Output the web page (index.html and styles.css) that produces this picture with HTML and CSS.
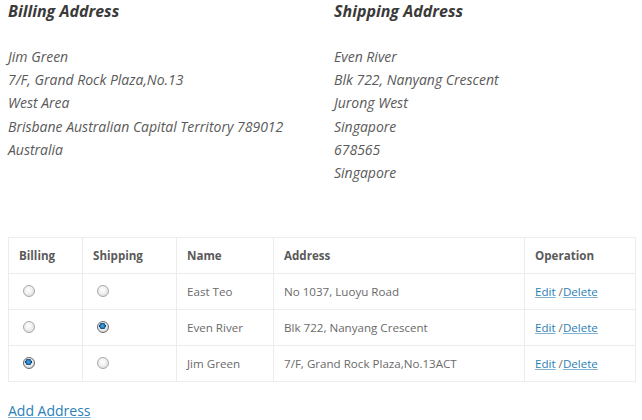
FILE: index.html
```html
<!DOCTYPE html>
<html>
<head>
<meta charset="utf-8">
<link rel="stylesheet" href="styles.css">
</head>
<body>
<div class="page">
  <div class="addresses">
    <div class="addr">
      <h3 class="addr-title">Billing Address</h3>
      <div class="addr-lines">
        <div>Jim Green</div>
        <div>7/F, Grand Rock Plaza,No.13</div>
        <div>West Area</div>
        <div>Brisbane Australian Capital Territory 789012</div>
        <div>Australia</div>
      </div>
    </div>
    <div class="addr">
      <h3 class="addr-title">Shipping Address</h3>
      <div class="addr-lines">
        <div>Even River</div>
        <div>Blk 722, Nanyang Crescent</div>
        <div>Jurong West</div>
        <div>Singapore</div>
        <div>678565</div>
        <div>Singapore</div>
      </div>
    </div>
  </div>

  <table class="book">
    <thead>
      <tr>
        <th class="c-bill">Billing</th>
        <th class="c-ship">Shipping</th>
        <th class="c-name">Name</th>
        <th class="c-addr">Address</th>
        <th class="c-op">Operation</th>
      </tr>
    </thead>
    <tbody>
      <tr>
        <td><input type="radio" class="radio" name="bill"></td>
        <td><input type="radio" class="radio" name="ship"></td>
        <td>East Teo</td>
        <td>No 1037, Luoyu Road</td>
        <td><a href="#">Edit</a> /<a href="#">Delete</a></td>
      </tr>
      <tr>
        <td><input type="radio" class="radio" name="bill"></td>
        <td><input type="radio" class="radio" name="ship" checked></td>
        <td>Even River</td>
        <td>Blk 722, Nanyang Crescent</td>
        <td><a href="#">Edit</a> /<a href="#">Delete</a></td>
      </tr>
      <tr>
        <td><input type="radio" class="radio" name="bill" checked></td>
        <td><input type="radio" class="radio" name="ship"></td>
        <td>Jim Green</td>
        <td>7/F, Grand Rock Plaza,No.13ACT</td>
        <td><a href="#">Edit</a> /<a href="#">Delete</a></td>
      </tr>
    </tbody>
  </table>

  <a class="add" href="#">Add Address</a>
</div>
</body>
</html>
```

FILE: styles.css
```css
html, body {
  margin: 0;
  padding: 0;
  background: #fff;
}
body {
  font-family: "Open Sans", "Liberation Sans", sans-serif;
  color: #555;
}
.page {
  padding: 0 8px;
}
.addresses {
  display: grid;
  grid-template-columns: 326px 1fr;
}
.addr-title {
  margin: 0;
  font-size: 16px;
  font-weight: 700;
  font-style: italic;
  color: #3a3a3a;
  line-height: 22px;
}
.addr-lines {
  margin-top: 23px;
  font-size: 14px;
  font-style: italic;
  line-height: 23.2px;
  color: #5a5a5a;
}
.book {
  margin-top: 53px;
  border-collapse: collapse;
  width: 628px;
  font-size: 11.6px;
  color: #6a6a6a;
}
.book th, .book td {
  border: 1px solid #ececec;
  text-align: left;
  padding: 0 10px;
  height: 35px;
}
.book th {
  font-weight: 700;
  color: #5a5a5a;
}
.c-bill { width: 53px; }
.c-ship { width: 73px; }
.c-name { width: 76px; }
.c-addr { width: 230px; }
.book a {
  color: #2b7fb5;
  text-decoration: underline;
  text-decoration-color: #7fb2d4;
}
.radio {
  appearance: none;
  -webkit-appearance: none;
  width: 12px;
  height: 12px;
  margin: 0 0 0 4px;
  border: 1px solid #a9a9a9;
  border-radius: 50%;
  background: radial-gradient(circle at 45% 40%, #ffffff 0%, #f0f0f0 45%, #cfcfcf 100%);
  vertical-align: middle;
  position: relative;
  top: -2px;
}
.radio:checked {
  border-color: #6a6a6a;
  background:
    radial-gradient(circle at 45% 40%, #5ab0e8 0%, #1a6fb0 28%, #0b3f6e 38%, transparent 42%),
    radial-gradient(circle at 45% 40%, #ffffff 0%, #e8e8e8 55%, #bdbdbd 100%);
}
.add {
  display: inline-block;
  margin-top: 19px;
  font-size: 14px;
  color: #2b7fb5;
  text-decoration: underline;
  text-decoration-color: #7fb2d4;
}
```
